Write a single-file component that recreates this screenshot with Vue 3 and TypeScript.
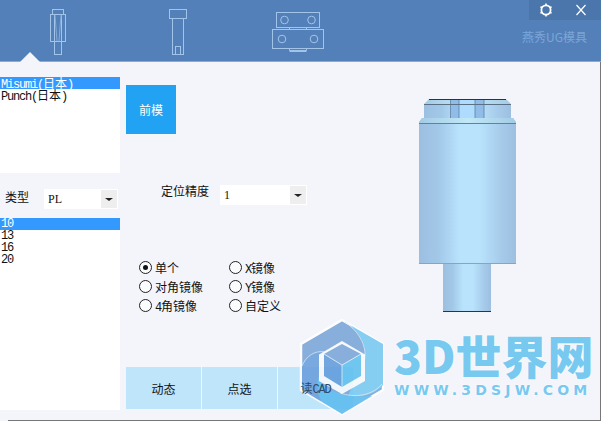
<template>
  <div class="app">
    <header class="header">
      <div class="tabs">
        <svg class="tab-icon" viewBox="28 0 60 62">
          <rect x="50.5" y="14.5" width="15" height="27" />
          <rect x="52.5" y="9.5" width="11" height="5" />
          <rect x="54.5" y="14.5" width="7" height="40" />
          <path class="faint" d="M55 15 L57 41 M61 15 L59 41" />
        </svg>
        <svg class="tab-icon" viewBox="148 0 60 62">
          <rect x="169.5" y="9.5" width="17" height="9" />
          <rect x="172.5" y="18.5" width="11" height="36" />
          <rect x="175.5" y="46.5" width="5" height="8" />
        </svg>
        <svg class="tab-icon" viewBox="268 0 60 62">
          <rect x="276.5" y="12.5" width="43" height="15" />
          <circle cx="284.5" cy="20" r="3.8" />
          <circle cx="311.5" cy="20" r="3.8" />
          <path d="M289.5 27.5 V29.5 M306.5 27.5 V29.5 M289.5 27.5 H306.5" />
          <rect x="272.5" y="29.5" width="51" height="19" />
          <circle cx="282" cy="39" r="3.8" />
          <circle cx="314" cy="39" r="3.8" />
          <path d="M289.5 48.5 V50.5 H306.5 V48.5 M289.5 51.5 H306.5" />
        </svg>
      </div>
      <div class="tab-arrow"></div>
      <div class="head-right">
        <div class="win-bar">
          <svg class="win-icon" viewBox="0 0 16 16">
            <circle cx="8" cy="8" r="4.6" fill="none" stroke="#fff" stroke-width="1.8" />
            <path d="M8 1.6 V3 M8 13 V14.4 M2.5 4.8 L3.8 5.6 M12.2 10.4 L13.5 11.2 M2.5 11.2 L3.8 10.4 M12.2 5.6 L13.5 4.8" stroke="#fff" stroke-width="1.6" />
          </svg>
          <svg class="win-icon" viewBox="0 0 16 16">
            <path d="M3.5 3 L12.5 13 M12.5 3 L3.5 13" stroke="#fff" stroke-width="1.2" fill="none" />
          </svg>
        </div>
        <div class="brand">燕秀UG模具</div>
      </div>
    </header>

    <main class="main">
      <aside class="left">
        <ul class="list list-top">
          <li v-for="(m, i) in makers" :key="m" :class="{ on: i === 0 }">{{ m }}(<span class="cjk">日本</span>)</li>
        </ul>
        <div class="type-row">
          <span class="type-label">类型</span>
          <div class="select type-select">
            <span class="select-val">PL</span>
            <span class="select-btn"></span>
          </div>
        </div>
        <ul class="list list-bottom">
          <li v-for="(s, i) in sizes" :key="s" :class="{ on: i === 0 }">{{ s }}</li>
        </ul>
      </aside>

      <section class="center">
        <button class="front-btn">前模</button>
        <div class="precision">
          <span class="precision-label">定位精度</span>
          <div class="select precision-select">
            <span class="select-val">1</span>
            <span class="select-btn"></span>
          </div>
        </div>
        <div class="radios">
          <label v-for="r in radios" :key="r.prefix + r.label" class="radio">
            <span class="dot" :class="{ checked: r.checked }"></span>
            <span><span class="lat">{{ r.prefix }}</span>{{ r.label }}</span>
          </label>
        </div>
        <div class="actions">
          <button class="action"><span class="action-text">动态</span></button>
          <button class="action"><span class="action-text">点选</span></button>
          <button class="action"><span class="action-text under-logo">读<span class="lat">CAD</span></span></button>
        </div>
      </section>

      <section class="preview">
        <svg class="part" viewBox="419 99 98 214" width="98" height="214">
          <defs>
            <linearGradient id="bodyGrad" x1="0" x2="1" y1="0" y2="0">
              <stop offset="0" stop-color="#9cbfe0" />
              <stop offset="0.2" stop-color="#a2c8e8" />
              <stop offset="0.42" stop-color="#b9e3fd" />
              <stop offset="0.62" stop-color="#b9e3fd" />
              <stop offset="0.85" stop-color="#a6cbea" />
              <stop offset="1" stop-color="#9ebfe0" />
            </linearGradient>
            <linearGradient id="chamferGrad" x1="0" x2="1" y1="0" y2="0">
              <stop offset="0" stop-color="#a4cbe6" />
              <stop offset="0.5" stop-color="#c0e8f6" />
              <stop offset="1" stop-color="#a4cbe6" />
            </linearGradient>
          </defs>
          <path d="M443 264 H491 V312 H443 Z" fill="url(#bodyGrad)" />
          <path d="M443 311.5 H491" stroke="#333" />
          <path d="M424 104 H511 V118 H424 Z" fill="url(#bodyGrad)" />
          <path d="M429 99 H506 L511 104 H424 Z" fill="url(#chamferGrad)" />
          <rect x="451" y="99" width="8" height="19" fill="#8fbce8" />
          <rect x="459" y="99" width="16" height="19" fill="#aedcff" />
          <rect x="475" y="99" width="9" height="19" fill="#8fbce8" />
          <path d="M450.5 99 V118 M459 99 V118 M475 99 V118 M484 99 V118" stroke="#5f7f9c" stroke-width="0.8" />
          <path d="M429 99.5 H506" stroke="#333" />
          <path d="M424 104.5 H511" stroke="#5c7085" />
          <path d="M419 264 V122 L422 118 H513 L516 122 V264 Z" fill="url(#bodyGrad)" />
          <path d="M422 118 H513 L516 123 H419 Z" fill="url(#chamferGrad)" />
          <path d="M419 123.5 H516" stroke="#6b7f92" />
          <path d="M419 263.5 H516" stroke="#8ba4bc" />
        </svg>
      </section>
    </main>
    <div class="foot-line"></div>

    <svg class="logo" viewBox="296 316 92 102" width="92" height="102">
      <path d="M342 320 L383 344 V390 L342 414 L301 390 V344 Z" fill="#7aa5d8" stroke="#fff" stroke-width="2.5" />
      <path d="M350 325 L383 344 V385 C375 394 362 398 348 396 L364 360 C368 348 362 336 350 325 Z" fill="#76c9f1" />
      <path d="M318 378 C326 392 345 398 372 396 L342 414 L322 402 C318 395 317 385 318 378 Z" fill="#5cbcee" />
      <path d="M302 366 C306 356 315 350 322 352 L318 378 C316 388 318 396 322 402 L302 390 Z" fill="#6a9fdc" />
      <path d="M302 366 C306 356 315 350 325 352 M345 322 C360 332 368 348 364 362 M340 393 C355 398 372 396 382 384" fill="none" stroke="#d6e8f8" stroke-width="0.8" />
      <path d="M342 341 L365 354.5 V381 L342 394 L319 381 V354.5 Z" fill="#f8f9fc" />
      <path d="M342 344 L361 354 L342 365 L324 354 Z" fill="#7aa5d8" />
      <path d="M324 354 L342 365 V387 L324 376 Z" fill="#609cdc" />
      <path d="M361 354 L342 365 V387 L361 376 Z" fill="#60c0ee" />
      <path d="M342 365 V387 M324 354 L342 365 L361 354" stroke="#e4f0fa" stroke-width="0.8" fill="none" />
    </svg>
    <div class="logo-text">
      <div class="logo-name">3D世界网</div>
      <div class="logo-url">WWW.3DSJW.COM</div>
    </div>
  </div>
</template>

<script setup lang="ts">
const makers = ['Misumi', 'Punch']
const sizes = ['10', '13', '16', '20']
const radios = [
  { prefix: '', label: '单个', checked: true },
  { prefix: 'X', label: '镜像', checked: false },
  { prefix: '', label: '对角镜像', checked: false },
  { prefix: 'Y', label: '镜像', checked: false },
  { prefix: '4', label: '角镜像', checked: false },
  { prefix: '', label: '自定义', checked: false }
]
</script>

<style>
html,
body {
  margin: 0;
  background: #f4f5fa;
  overflow: hidden;
}
</style>

<style scoped>
.app {
  position: relative;
  width: 601px;
  height: 421px;
  overflow: hidden;
  background: #f4f5fa;
  font-family: "Noto Sans CJK SC", sans-serif;
  font-size: 12px;
  color: #111;
}

.header {
  position: relative;
  display: flex;
  justify-content: space-between;
  height: 62px;
  box-sizing: border-box;
  background: #5480ba;
  border-bottom: 1px solid #8eaad2;
}

.tabs {
  display: flex;
  gap: 60px;
  padding-left: 28px;
}

.tab-icon {
  width: 60px;
  height: 62px;
  fill: none;
  stroke: #a2c4e8;
  stroke-width: 1;
}

.faint {
  stroke: #86abd6;
}

.tab-arrow {
  position: absolute;
  left: 20px;
  bottom: -1px;
  width: 0;
  height: 0;
  border-left: 10px solid transparent;
  border-right: 10px solid transparent;
  border-bottom: 10px solid #f4f5fa;
}

.head-right {
  display: flex;
  flex-direction: column;
  align-items: flex-end;
}

.win-bar {
  display: flex;
  align-items: center;
  justify-content: space-between;
  box-sizing: border-box;
  width: 72px;
  height: 20px;
  padding: 0 12px 0 9px;
  background: #4a76ab;
}

.win-icon {
  width: 16px;
  height: 16px;
}

.brand {
  margin: 10px 14px 0 0;
  color: #7ba6d8;
  line-height: 14px;
}

.main {
  display: flex;
  height: 358px;
  border-right: 1px solid #777;
}

.left {
  display: flex;
  flex-direction: column;
  width: 120px;
  padding-top: 15px;
}

.list {
  margin: 0;
  padding: 0;
  list-style: none;
  background: #fff;
  font-family: "Liberation Mono", "Noto Sans CJK SC", monospace;
  letter-spacing: -1.2px;
  line-height: 12px;
}

.list li {
  height: 12px;
  padding-left: 1px;
  white-space: nowrap;
}

.list li.on {
  background: #3399ff;
  color: #fff;
}

.cjk {
  letter-spacing: 0;
  font-family: "Noto Sans CJK SC", sans-serif;
}

.lat {
  font-family: "Liberation Mono", monospace;
  letter-spacing: -1.2px;
}

.list-top {
  height: 96px;
}

.type-row {
  display: flex;
  align-items: flex-start;
  gap: 15px;
  height: 20px;
  margin-top: 16px;
  padding-left: 5px;
}

.type-label {
  line-height: 16px;
}

.list-bottom {
  height: 192px;
  margin-top: 9px;
}

.select {
  display: flex;
  align-items: center;
  justify-content: space-between;
  box-sizing: border-box;
  height: 20px;
  padding: 1px;
  background: #fff;
  font-family: "Liberation Serif", serif;
}

.type-select {
  width: 74px;
}

.precision-select {
  width: 87px;
}

.select-val {
  padding-left: 3px;
}

.select-btn {
  position: relative;
  width: 16px;
  height: 18px;
  background: #eeeeee;
}

.select-btn::after {
  content: "";
  position: absolute;
  left: 4px;
  top: 8px;
  border-left: 4px solid transparent;
  border-right: 4px solid transparent;
  border-top: 3px solid #222;
}

.center {
  display: flex;
  flex-direction: column;
  align-items: flex-start;
  box-sizing: border-box;
  width: 280px;
  padding: 23px 0 0 6px;
}

.front-btn {
  width: 50px;
  height: 49px;
  padding: 0;
  border: 0;
  background: #22a2f2;
  color: #fff;
  font: inherit;
}

.precision {
  display: flex;
  gap: 10px;
  margin: 51px 0 0 35px;
}

.precision-label {
  line-height: 12px;
  width: 49px;
  white-space: nowrap;
}

.radios {
  display: grid;
  grid-template-columns: 90px 90px;
  grid-auto-rows: 19px;
  margin: 53px 0 0 13px;
}

.radio {
  display: flex;
  align-items: center;
  gap: 3px;
  white-space: nowrap;
}

.dot {
  position: relative;
  box-sizing: border-box;
  width: 13px;
  height: 13px;
  border: 1px solid #222;
  border-radius: 50%;
  background: #fbfcfe;
}

.dot.checked::after {
  content: "";
  position: absolute;
  left: 3px;
  top: 3px;
  width: 5px;
  height: 5px;
  border-radius: 50%;
  background: #111;
}

.actions {
  display: flex;
  gap: 1px;
  margin-top: 52px;
}

.action {
  width: 75px;
  height: 42px;
  padding: 0;
  border: 0;
  background: #bfe5fb;
  color: #111;
  font: inherit;
}

.action-text {
  position: relative;
  z-index: 1;
}

.under-logo {
  color: #2f4a68;
}

.preview {
  flex: 1;
  padding: 37px 0 0 19px;
}

.part {
  display: block;
}

.foot-line {
  height: 1px;
  margin-left: 8px;
  background: #777;
}

.logo {
  position: absolute;
  left: 296px;
  top: 316px;
  opacity: 0.88;
}

.logo-text {
  position: absolute;
  left: 394px;
  top: 326px;
  width: 204px;
  color: #78c9f0;
  font-weight: 900;
  text-shadow: 0 0 2px #fff;
}

.logo-name {
  font-size: 46px;
  line-height: 56px;
  white-space: nowrap;
}

.logo-url {
  font-family: "DejaVu Sans", sans-serif;
  font-size: 14px;
  font-weight: 700;
  line-height: 16px;
  letter-spacing: 4.2px;
  white-space: nowrap;
}
</style>
